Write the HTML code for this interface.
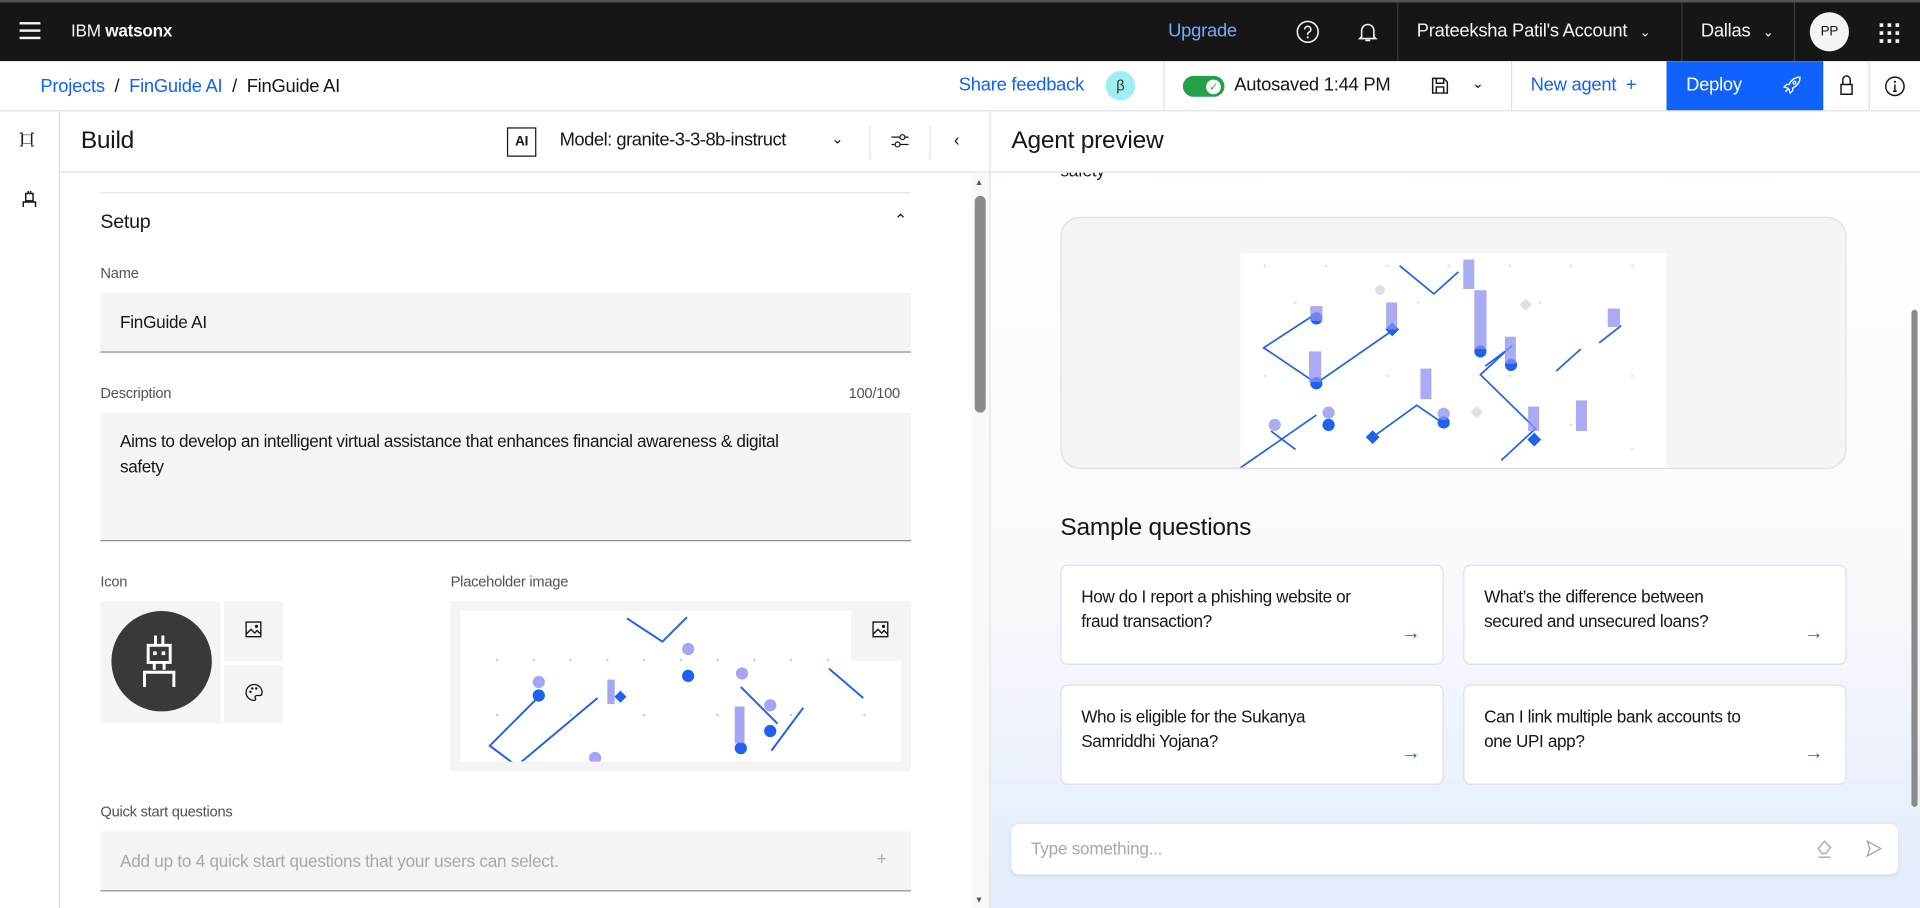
<!DOCTYPE html>
<html><head><meta charset="utf-8"><style>
*{box-sizing:border-box;margin:0;padding:0}
html,body{width:1920px;height:908px;overflow:hidden;background:#fff}
#w{width:1568px;height:742px;transform:scale(1.22449);transform-origin:0 0;position:relative;font-family:"Liberation Sans",sans-serif;color:#161616;font-size:14px;letter-spacing:-0.2px}
.a{position:absolute}
.top{left:0;top:0;width:1568px;height:50px;background:#161616;border-top:2px solid #555;color:#f4f4f4}
.crumb{left:0;top:50px;width:1568px;height:41px;border-bottom:1px solid #e0e0e0;background:#fff}
.blue{color:#0f62fe}
.vs{position:absolute;top:0;width:1px;background:#e0e0e0}
.field{background:#f4f4f4;border-bottom:1px solid #8d8d8d}
.lbl{font-size:12px;color:#525252}
.card{background:#fff;border:1px solid #e0e0e0;border-radius:6px;width:313px;height:82px;padding:15px 16px;font-size:14px;line-height:20px;letter-spacing:-0.3px}
.card .ar{position:absolute;right:18px;bottom:14px;color:#0f62fe;font-size:16px}
</style></head><body><div id="w">
<div class="a top">
 <div class="a" style="left:16px;top:16px;width:17px"><div style="height:2px;background:#f4f4f4;margin-bottom:4px"></div><div style="height:2px;background:#f4f4f4;margin-bottom:4px"></div><div style="height:2px;background:#f4f4f4"></div></div>
 <div class="a" style="left:58px;top:15px;font-size:14px">IBM <b>watsonx</b></div>
 <div class="a" style="left:954px;top:15px;color:#78a9ff;font-size:15px">Upgrade</div>
 <svg class="a" style="left:1058px;top:14px" width="20" height="20" viewBox="0 0 20 20"><circle cx="10" cy="10" r="8.5" fill="none" stroke="#f4f4f4" stroke-width="1.3"/><path d="M7.5 8a2.5 2.5 0 1 1 3.5 2.3c-.7.3-1 .8-1 1.5v.7" fill="none" stroke="#f4f4f4" stroke-width="1.3"/><circle cx="10" cy="14.5" r=".9" fill="#f4f4f4"/></svg>
 <svg class="a" style="left:1107px;top:14px" width="20" height="20" viewBox="0 0 20 20"><path d="M5 14V9a5 5 0 0 1 10 0v5l1.5 1.5h-13z M8 17h4" fill="none" stroke="#f4f4f4" stroke-width="1.3"/></svg>
 <div class="vs" style="left:1141px;height:48px;background:#393939"></div>
 <div class="a" style="left:1157px;top:15px;font-size:15px">Prateeksha Patil's Account <span style="font-size:11px;margin-left:6px">&#8964;</span></div>
 <div class="vs" style="left:1373px;height:48px;background:#393939"></div>
 <div class="a" style="left:1389px;top:15px;font-size:15px">Dallas <span style="font-size:11px;margin-left:6px">&#8964;</span></div>
 <div class="vs" style="left:1465px;height:48px;background:#393939"></div>
 <div class="a" style="left:1478px;top:8px;width:32px;height:32px;border-radius:50%;background:#f4f4f4;color:#161616;font-size:11px;text-align:center;line-height:32px">PP</div>
 <svg class="a" style="left:1534px;top:16px" width="18" height="18"><g fill="#f4f4f4"><rect x="1" y="1" width="3" height="3"/><rect x="7.5" y="1" width="3" height="3"/><rect x="14" y="1" width="3" height="3"/><rect x="1" y="7.5" width="3" height="3"/><rect x="7.5" y="7.5" width="3" height="3"/><rect x="14" y="7.5" width="3" height="3"/><rect x="1" y="14" width="3" height="3"/><rect x="7.5" y="14" width="3" height="3"/><rect x="14" y="14" width="3" height="3"/></g></svg>
</div>
<div class="a crumb">
 <div class="a" style="left:33px;top:12px;font-size:15px"><span class="blue">Projects</span> &nbsp;/&nbsp; <span class="blue">FinGuide AI</span> &nbsp;/&nbsp; FinGuide AI</div>
 <div class="a blue" style="left:783px;top:11px;font-size:15px">Share feedback</div>
 <div class="a" style="left:903px;top:8px;width:24px;height:24px;border-radius:50%;background:#9ef0f0;font-size:12px;text-align:center;line-height:24px;color:#333">β</div>
 <div class="vs" style="left:950px;height:40px"></div>
 <div class="a" style="left:966px;top:12px;width:34px;height:17px;border-radius:9px;background:#24a148"><div style="position:absolute;right:3px;top:2.5px;width:12px;height:12px;border-radius:50%;background:#fff;color:#24a148;font-size:9px;text-align:center;line-height:12px">✓</div></div>
 <div class="a" style="left:1008px;top:11px;font-size:15px">Autosaved 1:44 PM</div>
 <svg class="a" style="left:1168px;top:12px" width="16" height="16" viewBox="0 0 16 16"><path d="M2 2h9l3 3v9H2z M5 2v4h6V2 M5 14V9h6v5" fill="none" stroke="#161616" stroke-width="1.2"/></svg>
 <div class="a" style="left:1202px;top:11px;font-size:12px">&#8964;</div>
 <div class="vs" style="left:1234px;height:40px"></div>
 <div class="a blue" style="left:1250px;top:11px;font-size:15px">New agent &nbsp;+</div>
 <div class="a" style="left:1361px;top:0;width:128px;height:40px;background:#0f62fe;color:#fff;font-size:15px;padding:11px 16px">Deploy</div>
 <svg class="a" style="left:1455px;top:12px" width="16" height="16" viewBox="0 0 16 16"><path d="M15 1c-4 0-7 2-9 6L4 7 2 9l3 1 1 1 1 3 2-2v-2c4-2 6-5 6-9z M3 13l2-2" fill="none" stroke="#fff" stroke-width="1.1"/><circle cx="10.5" cy="5.5" r="1.2" fill="none" stroke="#fff"/></svg>
 <svg class="a" style="left:1502px;top:11px" width="12" height="17" viewBox="0 0 12 17"><path d="M3 8V4a3 3 0 0 1 6 0v4 M1.5 8h9v8h-9z" fill="none" stroke="#161616" stroke-width="1.2"/></svg>
 <div class="vs" style="left:1526px;height:40px"></div>
 <svg class="a" style="left:1539px;top:12px" width="17" height="17" viewBox="0 0 17 17"><circle cx="8.5" cy="8.5" r="7.5" fill="none" stroke="#161616" stroke-width="1.2"/><path d="M8.5 7v5 M7 12.5h3" stroke="#161616" stroke-width="1.2"/><circle cx="8.5" cy="4.8" r=".9" fill="#161616"/></svg>
</div>
<div class="a" style="left:0;top:91px;width:49px;height:651px;border-right:1px solid #e0e0e0"></div>
<div class="a" style="left:16px;top:106px;font-size:12px;letter-spacing:-1px">]□[</div>
<svg class="a" style="left:16px;top:155px" width="16" height="16" viewBox="0 0 16 16"><path d="M5 3h6v6H5z M7 1v2 M9 1v2 M3 14v-4h10v4" fill="none" stroke="#161616" stroke-width="1.2"/></svg>
<div class="a" style="left:49px;top:91px;width:760px;height:50px;border-bottom:1px solid #e0e0e0"></div>
<div class="a" style="left:66px;top:104px;font-size:20px">Build</div>
<div class="a" style="left:414px;top:104px;width:24px;height:24px;border:1px solid #161616;font-size:11px;font-weight:bold;text-align:center;line-height:22px">AI</div>
<div class="a" style="left:457px;top:106px;font-size:15px;letter-spacing:-0.4px">Model: granite-3-3-8b-instruct</div>
<div class="a" style="left:679px;top:106px;font-size:12px">&#8964;</div>
<div class="vs" style="left:710px;top:102px;height:28px"></div>
<svg class="a" style="left:727px;top:107px" width="16" height="16" viewBox="0 0 16 16"><path d="M1 5h14 M1 11h14" stroke="#161616"/><circle cx="10" cy="5" r="2" fill="#fff" stroke="#161616"/><circle cx="6" cy="11" r="2" fill="#fff" stroke="#161616"/></svg>
<div class="vs" style="left:759px;top:102px;height:28px"></div>
<div class="a" style="left:779px;top:106px;font-size:14px">&#8249;</div>
<div class="a" style="left:82px;top:157px;width:662px;height:1px;background:#e0e0e0"></div>
<div class="a" style="left:82px;top:173px;font-size:16px">Setup</div>
<div class="a" style="left:730px;top:172px;font-size:13px">&#8963;</div>
<div class="a lbl" style="left:82px;top:216px">Name</div>
<div class="a field" style="left:82px;top:239px;width:662px;height:49px;padding:16px;font-size:14px">FinGuide AI</div>
<div class="a lbl" style="left:82px;top:314px">Description</div>
<div class="a lbl" style="left:693px;top:314px">100/100</div>
<div class="a field" style="left:82px;top:337px;width:662px;height:105px;padding:13px 16px;font-size:14px;line-height:21px;letter-spacing:-0.3px">Aims to develop an intelligent virtual assistance that enhances financial awareness &amp; digital<br>safety</div>
<div class="a lbl" style="left:82px;top:468px">Icon</div>
<div class="a" style="left:82px;top:491px;width:98px;height:100px;background:#f4f4f4"></div>
<div class="a" style="left:91px;top:499px;width:82px;height:82px;border-radius:50%;background:#393939"></div>
<svg class="a" style="left:111px;top:517px" width="40" height="46" viewBox="0 0 40 46"><path d="M16 2v8 M22 2v8 M10 10h18v14H10z M15 24v6 M23 24v6 M7 44V32h24v12" fill="none" stroke="#fff" stroke-width="2.4"/><rect x="14" y="15" width="3" height="3" fill="#fff"/><rect x="21" y="15" width="3" height="3" fill="#fff"/></svg>
<div class="a" style="left:183px;top:491px;width:48px;height:49px;background:#f4f4f4"></div>
<div class="a" style="left:183px;top:543px;width:48px;height:48px;background:#f4f4f4"></div>
<svg class="a" style="left:200px;top:507px" width="14" height="14" viewBox="0 0 14 14"><path d="M1 1h12v12H1z M1 11l4-4 3 3 2-2 3 3" fill="none" stroke="#161616" stroke-width="1.1"/><circle cx="9.5" cy="4.5" r="1.3" fill="#161616"/></svg>
<svg class="a" style="left:200px;top:558px" width="15" height="15" viewBox="0 0 15 15"><path d="M7.5 1a6.5 6.5 0 0 0 0 13c1.3 0 1.5-1 1-2s0-2 1.5-2h2c1.5 0 2-1 2-2.5A6.5 6.5 0 0 0 7.5 1z" fill="none" stroke="#161616" stroke-width="1.1"/><circle cx="4.5" cy="7" r="1" fill="#161616"/><circle cx="6" cy="4.3" r="1" fill="#161616"/><circle cx="9.3" cy="4.3" r="1" fill="#161616"/></svg>
<div class="a lbl" style="left:368px;top:468px">Placeholder image</div>
<div class="a" style="left:368px;top:491px;width:376px;height:139px;background:#f4f4f4"></div>
<svg class="a" style="left:376px;top:499px" width="360" height="123" viewBox="0 0 360 123"><rect width="360" height="123" fill="#fff"/><rect x="319" y="0" width="41" height="41" fill="#f4f4f4"/>
<g stroke="#1f62f0" stroke-width="1.6" fill="none"><path d="M64 70l-40 40 20 15 M50 123l62-52 M136 6l29 19 20-20 M229 62l30 30 M254 114l26-35 M301 47l28 24"/></g>
<g fill="#1f62f0"><circle cx="64" cy="69" r="5"/><circle cx="186" cy="53" r="5"/><circle cx="229" cy="112" r="5"/><circle cx="253" cy="98" r="5"/><rect x="127" y="66" width="7" height="7" transform="rotate(45 130 70)"/></g>
<g fill="#8f8ff0" opacity=".8"><circle cx="64" cy="58" r="5"/><circle cx="230" cy="51" r="5"/><circle cx="253" cy="77" r="5"/><circle cx="110" cy="120" r="5"/><circle cx="186" cy="31" r="5"/><rect x="120" y="56" width="6" height="20"/><rect x="224" y="78" width="8" height="30"/></g>
<g fill="#ccc"><circle cx="30" cy="40" r="1"/><circle cx="60" cy="40" r="1"/><circle cx="90" cy="40" r="1"/><circle cx="120" cy="40" r="1"/><circle cx="150" cy="40" r="1"/><circle cx="180" cy="40" r="1"/><circle cx="210" cy="40" r="1"/><circle cx="240" cy="40" r="1"/><circle cx="270" cy="40" r="1"/><circle cx="300" cy="40" r="1"/><circle cx="30" cy="85" r="1"/><circle cx="90" cy="85" r="1"/><circle cx="150" cy="85" r="1"/><circle cx="210" cy="85" r="1"/><circle cx="270" cy="85" r="1"/><circle cx="330" cy="85" r="1"/></g></svg>
<svg class="a" style="left:712px;top:507px" width="14" height="14" viewBox="0 0 14 14"><path d="M1 1h12v12H1z M1 11l4-4 3 3 2-2 3 3" fill="none" stroke="#161616" stroke-width="1.1"/><circle cx="9.5" cy="4.5" r="1.3" fill="#161616"/></svg>
<div class="a lbl" style="left:82px;top:656px">Quick start questions</div>
<div class="a field" style="left:82px;top:679px;width:662px;height:49px;padding:16px;font-size:14px;color:#a8a8a8">Add up to 4 quick start questions that your users can select.<span style="position:absolute;right:20px;top:14px">+</span></div>
<div class="a" style="left:794px;top:141px;width:14px;height:601px;background:#f8f8f8"></div>
<div class="a" style="left:796px;top:160px;width:9px;height:177px;border-radius:5px;background:#8a8a8a"></div>
<div class="a" style="left:796px;top:146px;font-size:7px;color:#555">▲</div>
<div class="a" style="left:796px;top:732px;font-size:7px;color:#555">▼</div>
<div class="vs" style="left:808px;top:91px;height:651px"></div>
<div class="a" style="left:809px;top:141px;width:759px;height:601px;background:linear-gradient(#fff 0%,#f6f8fc 60%,#e3ebfc 100%)"></div>
<div class="a" style="left:866px;top:132px;font-size:14px;line-height:14px">safety</div>
<div class="a" style="left:809px;top:91px;width:759px;height:50px;background:#fff;border-bottom:1px solid #e0e0e0"></div>
<div class="a" style="left:826px;top:104px;font-size:20px">Agent preview</div>
<div class="a" style="left:866px;top:177px;width:642px;height:206px;background:#f4f4f4;border:1px solid #e0e0e0;border-radius:16px"></div>
<svg class="a" style="left:1013px;top:207px" width="348" height="175" viewBox="0 0 348 175"><rect width="348" height="175" fill="#fff"/>
<g fill="#ddd"><circle cx="20" cy="10" r="1"/><circle cx="70" cy="10" r="1"/><circle cx="120" cy="10" r="1"/><circle cx="170" cy="10" r="1"/><circle cx="220" cy="10" r="1"/><circle cx="270" cy="10" r="1"/><circle cx="320" cy="10" r="1"/><circle cx="45" cy="40" r="1"/><circle cx="145" cy="40" r="1"/><circle cx="245" cy="40" r="1"/><circle cx="20" cy="100" r="1"/><circle cx="120" cy="100" r="1"/><circle cx="220" cy="100" r="1"/><circle cx="320" cy="100" r="1"/><circle cx="70" cy="140" r="1"/><circle cx="170" cy="140" r="1"/><circle cx="270" cy="140" r="1"/><circle cx="320" cy="160" r="1"/></g>
<g stroke="#1f62f0" stroke-width="1.4" fill="none"><path d="M62 49l-43 28 43 29 62-43 M130 10l28 23 20-18 M222 75l-26 24 45 44 M241 143l-28 26 M200 92l16-12 M278 78l-20 18 M0 175l62-43 M25 145l20 15 M108 150l36-26 22 15 M311 59l-18 14"/></g>
<g fill="#1f62f0"><circle cx="62" cy="53" r="5"/><circle cx="62" cy="106" r="5"/><circle cx="196" cy="80" r="5"/><circle cx="221" cy="91" r="5"/><circle cx="72" cy="140" r="5"/><circle cx="166" cy="138" r="5"/><rect x="120" y="58" width="8" height="8" transform="rotate(45 124 62)"/><rect x="104" y="146" width="8" height="8" transform="rotate(45 108 150)"/><rect x="236" y="148" width="8" height="8" transform="rotate(45 240 152)"/></g>
<g fill="#8f8ff0" opacity=".75"><rect x="57" y="43" width="10" height="12"/><rect x="119" y="40" width="9" height="22"/><rect x="56" y="80" width="10" height="25"/><rect x="191" y="30" width="10" height="48"/><rect x="216" y="68" width="9" height="22"/><rect x="182" y="5" width="9" height="24"/><rect x="147" y="94" width="9" height="25"/><rect x="274" y="120" width="9" height="25"/><rect x="235" y="125" width="9" height="20"/><rect x="300" y="45" width="10" height="15"/><circle cx="166" cy="131" r="5"/><circle cx="28" cy="140" r="5"/><circle cx="72" cy="130" r="5"/></g>
<g fill="#e0e0e0"><circle cx="114" cy="30" r="4"/><rect x="230" y="38" width="7" height="7" transform="rotate(45 233 41)"/><rect x="190" y="126" width="7" height="7" transform="rotate(45 193 129)"/></g></svg>
<div class="a" style="left:866px;top:420px;font-size:20px">Sample questions</div>
<div class="a card" style="left:866px;top:461px">How do I report a phishing website or<br>fraud transaction?<span class="ar">→</span></div>
<div class="a card" style="left:1195px;top:461px">What’s the difference between<br>secured and unsecured loans?<span class="ar">→</span></div>
<div class="a card" style="left:866px;top:559px">Who is eligible for the Sukanya<br>Samriddhi Yojana?<span class="ar">→</span></div>
<div class="a card" style="left:1195px;top:559px">Can I link multiple bank accounts to<br>one UPI app?<span class="ar">→</span></div>
<div class="a" style="left:1560px;top:141px;width:8px;height:520px"><div style="position:absolute;left:1px;top:112px;width:5px;height:406px;border-radius:3px;background:#8a8a8a"></div></div>
<div class="a" style="left:826px;top:673px;width:724px;height:41px;background:#fff;border-radius:6px;box-shadow:0 1px 4px rgba(0,0,0,.08);padding:12px 16px;font-size:14px;color:#a8a8a8">Type something...</div>
<svg class="a" style="left:1482px;top:685px" width="16" height="16" viewBox="0 0 16 16"><path d="M8 2l5 5-4 5H6L3 8z M3 15h10" fill="none" stroke="#a8a8a8" stroke-width="1.1"/></svg>
<svg class="a" style="left:1523px;top:686px" width="14" height="14" viewBox="0 0 14 14"><path d="M2 1l11 6-11 6 2-6z" fill="none" stroke="#a8a8a8" stroke-width="1.1"/></svg>
</div></body></html>
